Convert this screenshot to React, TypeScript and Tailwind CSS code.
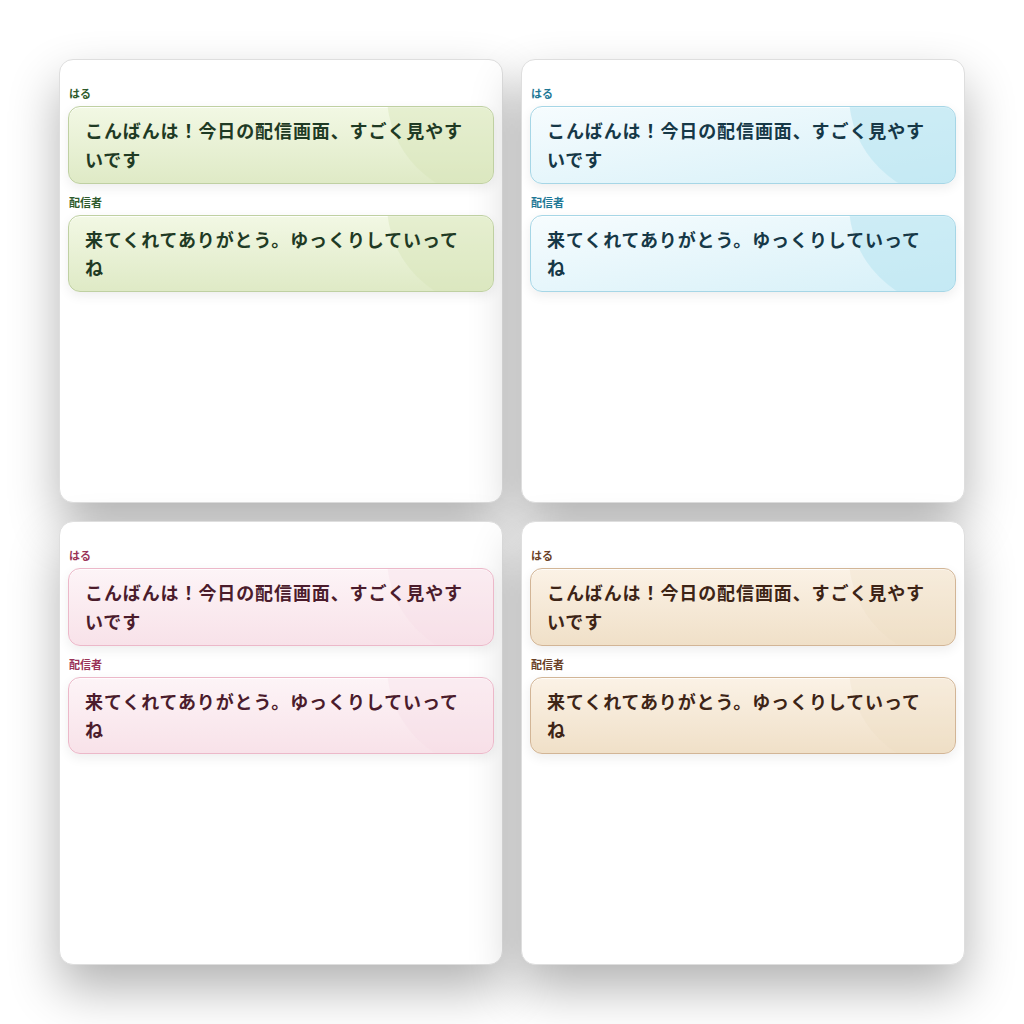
import React from 'react'

type Theme = {
  label: string
  text: string
  bubble: string
  glow: string
}

const themes: Theme[] = [
  {
    label: 'text-[#2f5a2c]',
    text: 'text-[#1f3a24]',
    bubble: 'border-[#bfd0a2] bg-gradient-to-b from-[#f2f8e4] to-[#dfeac6]',
    glow: 'bg-[#d6e4b8]/45',
  },
  {
    label: 'text-[#1f7896]',
    text: 'text-[#163847]',
    bubble: 'border-[#a6d6e6] bg-gradient-to-br from-[#f6fcfe] via-[#e6f6fb] to-[#d6f0f8]',
    glow: 'bg-[#b7e4f1]/55',
  },
  {
    label: 'text-[#9a3358]',
    text: 'text-[#4b1c2c]',
    bubble: 'border-[#ecb8c9] bg-gradient-to-b from-[#fdf4f7] to-[#f8e2e9]',
    glow: 'bg-[#f6dbe4]/30',
  },
  {
    label: 'text-[#6a4127]',
    text: 'text-[#3d2416]',
    bubble: 'border-[#d2b596] bg-gradient-to-b from-[#fbf2e6] to-[#f0e0c8]',
    glow: 'bg-[#ecdabf]/25',
  },
]

const messages = [
  { name: 'はる', body: 'こんばんは！今日の配信画面、すごく見やすいです' },
  { name: '配信者', body: '来てくれてありがとう。ゆっくりしていってね' },
]

function Bubble({ theme, body }: { theme: Theme; body: string }) {
  return (
    <div
      className={`relative overflow-hidden rounded-[12px] border pl-[16px] pr-[18px] py-[9px] shadow-[0_4px_12px_rgba(0,0,0,0.07),inset_0_1px_0_rgba(255,255,255,0.8)] ${theme.bubble}`}
    >
      <div className={`absolute right-[-100px] top-[-115px] h-[206px] w-[206px] rounded-full ${theme.glow}`} />
      <p className={`relative text-[18px] font-bold leading-[1.6] tracking-[0.05em] ${theme.text}`}>{body}</p>
    </div>
  )
}

function ChatCard({ theme }: { theme: Theme }) {
  return (
    <div className="h-[444px] w-[444px] rounded-[14px] border border-[#dedede] bg-white px-[8px] pt-[25px] shadow-[0_24px_50px_rgba(0,0,0,0.3)]">
      {messages.map((m, i) => (
        <div key={i} className="mb-[10px]">
          <div className={`mb-[5px] pl-[1px] text-[11px] font-bold leading-[16px] ${theme.label}`}>{m.name}</div>
          <Bubble theme={theme} body={m.body} />
        </div>
      ))}
    </div>
  )
}

export default function App() {
  return (
    <div
      className="flex min-h-screen items-center justify-center bg-white"
      style={{ fontFamily: '"Noto Sans CJK JP", "Noto Sans", sans-serif' }}
    >
      <div className="grid grid-cols-2 gap-[18px]">
        {themes.map((t, i) => (
          <ChatCard key={i} theme={t} />
        ))}
      </div>
    </div>
  )
}
